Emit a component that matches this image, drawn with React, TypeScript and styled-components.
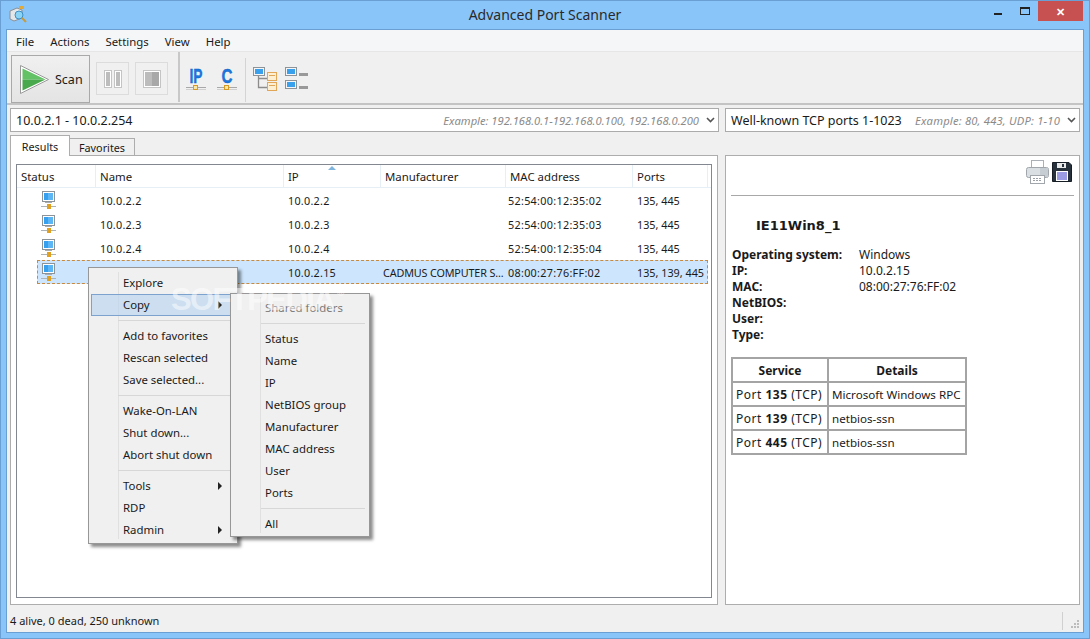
import styled, { createGlobalStyle } from 'styled-components';

const menuBar = ['File', 'Actions', 'Settings', 'View', 'Help'];

const columns = [
  { label: 'Status', width: 79 },
  { label: 'Name', width: 188 },
  { label: 'IP', width: 97 },
  { label: 'Manufacturer', width: 125 },
  { label: 'MAC address', width: 127 },
  { label: 'Ports', width: 75 },
];

const hosts = [
  { name: '10.0.2.2', ip: '10.0.2.2', maker: '', mac: '52:54:00:12:35:02', ports: '135, 445' },
  { name: '10.0.2.3', ip: '10.0.2.3', maker: '', mac: '52:54:00:12:35:03', ports: '135, 445' },
  { name: '10.0.2.4', ip: '10.0.2.4', maker: '', mac: '52:54:00:12:35:04', ports: '135, 445' },
  { name: '', ip: '10.0.2.15', maker: 'CADMUS COMPUTER S...', mac: '08:00:27:76:FF:02', ports: '135, 139, 445', selected: true },
];

const info = [
  ['Operating system:', 'Windows'],
  ['IP:', '10.0.2.15'],
  ['MAC:', '08:00:27:76:FF:02'],
  ['NetBIOS:', ''],
  ['User:', ''],
  ['Type:', ''],
];

const services = [
  { port: '135', details: 'Microsoft Windows RPC' },
  { port: '139', details: 'netbios-ssn' },
  { port: '445', details: 'netbios-ssn' },
];

type MenuEntry = { label?: string; arrow?: boolean; active?: boolean; muted?: boolean };

const mainMenu: MenuEntry[] = [
  { label: 'Explore' },
  { label: 'Copy', arrow: true, active: true },
  {},
  { label: 'Add to favorites' },
  { label: 'Rescan selected' },
  { label: 'Save selected...' },
  {},
  { label: 'Wake-On-LAN' },
  { label: 'Shut down...' },
  { label: 'Abort shut down' },
  {},
  { label: 'Tools', arrow: true },
  { label: 'RDP' },
  { label: 'Radmin', arrow: true },
];

const copyMenu: MenuEntry[] = [
  { label: 'Shared folders', muted: true },
  {},
  { label: 'Status' },
  { label: 'Name' },
  { label: 'IP' },
  { label: 'NetBIOS group' },
  { label: 'Manufacturer' },
  { label: 'MAC address' },
  { label: 'User' },
  { label: 'Ports' },
  {},
  { label: 'All' },
];

function AppIcon() {
  return (
    <svg width='18' height='18' viewBox='0 0 18 18'>
      <path d='M1 5 L8 2 L13 4 L13 12 L5 15 L1 13 Z' fill='#e4e6e8' stroke='#8a8f96' />
      <rect x='10' y='0' width='5' height='3' fill='#e0a93c' />
      <circle cx='10' cy='9' r='4' fill='#8cd4f6' stroke='#3f8fc4' />
      <path d='M13 12 L17 16' stroke='#c99a3a' strokeWidth='2' />
    </svg>
  );
}

function HostIcon() {
  return (
    <svg width='16' height='19' viewBox='0 0 16 19'>
      <rect x='1.5' y='0.5' width='12' height='10' fill='#fff' stroke='#8d9499' />
      <rect x='3' y='2' width='9' height='7' fill='#36a0ee' />
      <rect x='7' y='2' width='5' height='7' fill='#5cb6f5' />
      <rect x='4' y='11' width='7' height='1' fill='#a8adb2' />
      <path d='M0 15.5 H15' stroke='#aeb3b6' />
      <rect x='6' y='13' width='4' height='5' fill='#e0a020' />
    </svg>
  );
}

function PlayIcon() {
  return (
    <svg width='29' height='29' viewBox='0 0 29 29'>
      <path d='M0.5 0.5 L28.5 14.5 L0.5 28.5 Z' fill='#fff' stroke='#9a9a9a' />
      <path d='M2.5 3.5 L25.5 14.5 L2.5 14.5 Z' fill='#62c265' />
      <path d='M2.5 14.5 L25.5 14.5 L2.5 25.5 Z' fill='#48a84c' />
    </svg>
  );
}

function PauseIcon() {
  return (
    <svg width='18' height='18' viewBox='0 0 18 18'>
      <rect x='0.5' y='0.5' width='7' height='17' fill='#fff' stroke='#c4c4c4' />
      <rect x='2' y='2' width='4' height='14' fill='#bdbdbd' />
      <rect x='10.5' y='0.5' width='7' height='17' fill='#fff' stroke='#c4c4c4' />
      <rect x='12' y='2' width='4' height='14' fill='#bdbdbd' />
    </svg>
  );
}

function StopIcon() {
  return (
    <svg width='18' height='18' viewBox='0 0 18 18'>
      <rect x='0.5' y='0.5' width='17' height='17' fill='#fff' stroke='#c4c4c4' />
      <rect x='2' y='2' width='14' height='14' fill='#bcbcbc' />
      <rect x='9' y='2' width='7' height='14' fill='#a8a8a8' />
    </svg>
  );
}

function ScanRangeIcon({ label, textWidth }: { label: string; textWidth: number }) {
  return (
    <svg width='20' height='24' viewBox='0 0 20 24'>
      <text
        x='10'
        y='16'
        textAnchor='middle'
        textLength={textWidth}
        lengthAdjust='spacingAndGlyphs'
        fontFamily='Liberation Sans, sans-serif'
        fontWeight='700'
        fontSize='20'
        fill='#1a78e0'
        stroke='#0d5cc0'
        strokeWidth='0.4'
      >
        {label}
      </text>
      <path d='M0 20.5 H20' stroke='#a8a8a8' />
      <path d='M0 22.5 H20' stroke='#d0d0d0' />
      <rect x='7.5' y='18.5' width='4' height='4' fill='#f8e8a8' stroke='#d89a20' />
    </svg>
  );
}

function TreeIcon() {
  return (
    <svg width='25' height='24' viewBox='0 0 25 24'>
      <rect x='0.5' y='0.5' width='11' height='8' fill='#f4f6f8' stroke='#8d9499' />
      <rect x='2' y='2' width='8' height='5' fill='#38a0ec' />
      <path d='M5.5 9 V20.5 H14 M5.5 11.5 H14' fill='none' stroke='#8c8c8c' strokeWidth='1.3' />
      <rect x='14.5' y='5.5' width='9' height='8' fill='#fdf0d2' stroke='#e2a658' />
      <path d='M16 8.5 H22' stroke='#e2a658' />
      <rect x='14.5' y='15.5' width='9' height='8' fill='#fdf0d2' stroke='#e2a658' />
      <path d='M16 18.5 H22' stroke='#e2a658' />
    </svg>
  );
}

function ListIcon() {
  return (
    <svg width='23' height='23' viewBox='0 0 23 23'>
      <rect x='0.5' y='0.5' width='11' height='8' fill='#f4f6f8' stroke='#8d9499' />
      <rect x='2' y='2' width='8' height='5' fill='#38a0ec' />
      <rect x='14' y='6' width='9' height='3' fill='#999' />
      <rect x='0.5' y='13.5' width='11' height='8' fill='#f4f6f8' stroke='#8d9499' />
      <rect x='2' y='15' width='8' height='5' fill='#38a0ec' />
      <rect x='14' y='19' width='9' height='3' fill='#999' />
    </svg>
  );
}

function PrinterIcon() {
  return (
    <svg width='23' height='24' viewBox='0 0 23 24'>
      <rect x='5.5' y='0.5' width='12' height='8' fill='#fff' stroke='#aab0b5' />
      <rect x='0.5' y='7.5' width='22' height='10' rx='2' fill='#d9dfe3' stroke='#a0a6ab' />
      <rect x='14' y='8' width='8' height='9' fill='#c6ced3' />
      <rect x='4.5' y='15.5' width='14' height='8' fill='#fff' stroke='#a0a6ab' />
      <path d='M7 18.5 H16 M7 20.5 H16' stroke='#9aa0a5' strokeDasharray='2 1' />
    </svg>
  );
}

function SaveIcon() {
  return (
    <svg width='20' height='20' viewBox='0 0 20 20'>
      <path d='M0.5 0.5 H17 L19.5 3 V19.5 H0.5 Z' fill='#27313c' stroke='#171d24' />
      <rect x='5' y='1' width='9' height='5' fill='#e8e8e8' />
      <rect x='10' y='2' width='2' height='3' fill='#27313c' />
      <rect x='4' y='9' width='12' height='10' fill='#fff' />
      <path d='M5 11 H15 M5 13 H15 M5 15 H15 M5 17 H15' stroke='#3838c8' />
    </svg>
  );
}

function Chevron() {
  return (
    <svg width='9' height='6' viewBox='0 0 9 6'>
      <path d='M1 1 L4.5 4.5 L8 1' fill='none' stroke='#555' strokeWidth='1.6' />
    </svg>
  );
}

function ContextMenu({ items, variant }: { items: MenuEntry[]; variant: 'main' | 'copy' }) {
  const Box = variant === 'main' ? MainMenu_div : CopyMenu_div;
  return (
    <Box>
      {items.map((item, index) =>
        item.label ? (
          <MenuItem_div
            key={index}
            $active={item.active}
            $muted={item.muted}
            $indent={variant === 'main' ? 32 : 31}
          >
            {item.label}
            {item.arrow && <MenuArrow_span />}
          </MenuItem_div>
        ) : (
          <MenuSeparator_div key={index} />
        ),
      )}
    </Box>
  );
}

export default function App() {
  return (
    <>
      <GlobalStyle />
      <Window_div>
        {/* Title bar */}
        <TitleBar_div>
          <TitleIcon_span>
            <AppIcon />
          </TitleIcon_span>
          <Title_span>Advanced Port Scanner</Title_span>
          <WindowButtons_div>
            <MinimizeButton_span />
            <MaximizeButton_span />
            <CloseButton_span>✕</CloseButton_span>
          </WindowButtons_div>
        </TitleBar_div>

        <Client_div>
          {/* Menu */}
          <MenuBar_div>
            {menuBar.map((name) => (
              <span key={name}>{name}</span>
            ))}
          </MenuBar_div>

          {/* Toolbar */}
          <Toolbar_div>
            <ScanButton_div>
              <PlayIcon />
              <span>Scan</span>
            </ScanButton_div>
            <GhostButton_div>
              <PauseIcon />
            </GhostButton_div>
            <GhostButton_div>
              <StopIcon />
            </GhostButton_div>
            <ToolbarDivider_div />
            <ToolIcons_div>
              <ScanRangeIcon label='IP' textWidth={13} />
              <ScanRangeIcon label='C' textWidth={11} />
              <SmallDivider_div />
              <TreeIcon />
              <ListSlot_span>
                <ListIcon />
              </ListSlot_span>
            </ToolIcons_div>
          </Toolbar_div>

          {/* Range and ports */}
          <InputRow_div>
            <Combo_div $width={709}>
              <ComboValue_span>10.0.2.1 - 10.0.2.254</ComboValue_span>
              <ComboHint_span>Example: 192.168.0.1-192.168.0.100, 192.168.0.200</ComboHint_span>
              <Chevron />
            </Combo_div>
            <Combo_div $width={355}>
              <ComboValue_span>Well-known TCP ports 1-1023</ComboValue_span>
              <ComboHint_span $spacing={0.2}>Example: 80, 443, UDP: 1-10</ComboHint_span>
              <Chevron />
            </Combo_div>
          </InputRow_div>

          <Body_div>
            {/* Left side */}
            <LeftColumn_div>
              <Tabs_div>
                <Tab_div $current>Results</Tab_div>
                <Tab_div>Favorites</Tab_div>
              </Tabs_div>
              <TabPane_div>
                <List_div>
                  <ListHeader_div>
                    {columns.map((col) => (
                      <HeaderCell_div key={col.label} $width={col.width}>
                        {col.label}
                        {col.label === 'IP' && <SortMark_span />}
                      </HeaderCell_div>
                    ))}
                  </ListHeader_div>
                  {hosts.map((host) => (
                    <HostRow_div key={host.ip}>
                      <HostFields_div $selected={host.selected}>
                        <IconCell_div>
                          <HostIcon />
                        </IconCell_div>
                        <Cell_div $width={188} $spacing={0.25}>{host.name}</Cell_div>
                        <Cell_div $width={95} $spacing={0.25}>{host.ip}</Cell_div>
                        <Cell_div $width={125} $spacing={-0.15}>{host.maker}</Cell_div>
                        <Cell_div $width={129} $spacing={0.3}>{host.mac}</Cell_div>
                        <Cell_div $width={75}>{host.ports}</Cell_div>
                      </HostFields_div>
                    </HostRow_div>
                  ))}
                </List_div>
              </TabPane_div>
            </LeftColumn_div>

            {/* Right side */}
            <Details_div>
              <DetailsTools_div>
                <PrinterIcon />
                <SaveIcon />
              </DetailsTools_div>
              <HostName_h2>IE11Win8_1</HostName_h2>
              <Info_dl>
                {info.map(([label, value]) => (
                  <InfoRow_div key={label}>
                    <dt>{label}</dt>
                    <dd>{value}</dd>
                  </InfoRow_div>
                ))}
              </Info_dl>
              <Services_table>
                <thead>
                  <tr>
                    <th>Service</th>
                    <th>Details</th>
                  </tr>
                </thead>
                <tbody>
                  {services.map((service) => (
                    <tr key={service.port}>
                      <td>
                        Port <b>{service.port}</b> (TCP)
                      </td>
                      <td>{service.details}</td>
                    </tr>
                  ))}
                </tbody>
              </Services_table>
            </Details_div>
          </Body_div>

          {/* Status bar */}
          <StatusBar_div>
            <span>4 alive, 0 dead, 250 unknown</span>
            <StatusDivider_div />
            <Grip_svg viewBox='0 0 9 9'>
              <path d='M7 0h2v2H7zM4 3h2v2H4zM7 3h2v2H7zM1 6h2v2H1zM4 6h2v2H4zM7 6h2v2H7z' fill='#bcbcbc' />
            </Grip_svg>
          </StatusBar_div>
        </Client_div>

        {/* Popups */}
        <ContextMenu items={mainMenu} variant='main' />
        <ContextMenu items={copyMenu} variant='copy' />
        <Watermark_div>
          SOFTPEDIA<WatermarkMark_span>®</WatermarkMark_span>
        </Watermark_div>
      </Window_div>
    </>
  );
}
// --------------- Styled ---------------
const GlobalStyle = createGlobalStyle`
  html, body {
    margin: 0;
    padding: 0;
    overflow: hidden;
  }
  * {
    box-sizing: border-box;
  }
  body {
    font-family: 'Noto Sans', 'Liberation Sans', sans-serif;
    font-size: 11.4px;
    color: #1a1a1a;
  }
`;
const Window_div = styled.div`
  position: relative;
  width: 1090px;
  height: 639px;
  background: #8ac5fa;
  box-shadow: inset 0 0 0 1px #6a9fd4;
  display: flex;
  flex-direction: column;
  overflow: hidden;
`;
const TitleBar_div = styled.div`
  position: relative;
  height: 30px;
  flex: none;
  display: flex;
  align-items: center;
  justify-content: center;
  padding-bottom: 1px;
`;
const TitleIcon_span = styled.span`
  position: absolute;
  left: 9px;
  top: 6px;
  line-height: 0;
`;
const Title_span = styled.span`
  font-size: 14px;
  color: #2a2a2a;
`;
const WindowButtons_div = styled.div`
  position: absolute;
  right: 7px;
  top: 1px;
  display: flex;
  align-items: flex-start;
`;
const MinimizeButton_span = styled.span`
  width: 8px;
  height: 2px;
  margin: 12px 18px 0 0;
  background: #222;
`;
const MaximizeButton_span = styled.span`
  width: 10px;
  height: 8px;
  margin-top: 6px;
  border: 1px solid #222;
  border-top-width: 2px;
`;
const CloseButton_span = styled.span`
  width: 45px;
  height: 20px;
  margin-left: 8px;
  background: #c75050;
  color: #fff;
  font-size: 11px;
  font-weight: 700;
  display: flex;
  align-items: center;
  justify-content: center;
`;
const Client_div = styled.div`
  flex: 1;
  margin: 0 7px 7px;
  background: #f0f0f0;
  display: flex;
  flex-direction: column;
  min-height: 0;
  box-shadow: 0 0 0 1px #6a9fd4;
`;
const MenuBar_div = styled.div`
  height: 22px;
  flex: none;
  background: #f5f6f7;
  border-bottom: 1px solid #e6e6e6;
  display: flex;
  align-items: center;
  gap: 16px;
  padding: 1px 0 0 9px;
`;
const Toolbar_div = styled.div`
  height: 53px;
  flex: none;
  border-bottom: 2px solid #c4c4c4;
  display: flex;
  align-items: flex-start;
  padding: 3px 0 0 4px;
`;
const ScanButton_div = styled.div`
  width: 79px;
  height: 48px;
  border: 1px solid #a9a9a9;
  background: linear-gradient(#f0f0f0, #e4e4e4);
  display: flex;
  align-items: center;
  gap: 6px;
  padding: 1px 0 0 8px;
  font-size: 12.5px;
`;
const GhostButton_div = styled.div`
  width: 33px;
  height: 33px;
  margin: 7px 0 0 6px;
  border: 1px solid #dcdcdc;
  display: flex;
  align-items: center;
  justify-content: center;
`;
const ToolbarDivider_div = styled.div`
  width: 2px;
  height: 50px;
  margin: -3px 0 0 10px;
  background: #c8c8c8;
`;
const ToolIcons_div = styled.div`
  display: flex;
  align-items: flex-start;
  gap: 11px;
  padding: 12px 0 0 6px;
`;
const SmallDivider_div = styled.div`
  width: 1px;
  height: 44px;
  margin: -9px -4px 0 -3px;
  background: #d4d4d4;
`;
const ListSlot_span = styled.span`
  margin-left: -4px;
  line-height: 0;
`;
const InputRow_div = styled.div`
  height: 30px;
  flex: none;
  display: flex;
  gap: 6px;
  padding: 3px 0 0 3px;
`;
const Combo_div = styled.div<{ $width: number }>`
  width: ${(p) => p.$width}px;
  height: 24px;
  background: #fff;
  border: 1px solid #ababab;
  display: flex;
  align-items: center;
  padding: 0 3px 0 5px;
`;
const ComboValue_span = styled.span`
  font-size: 12.5px;
`;
const ComboHint_span = styled.span<{ $spacing?: number }>`
  margin-left: auto;
  margin-right: 7px;
  font-size: 11.2px;
  font-style: italic;
  letter-spacing: ${(p) => p.$spacing ?? 0}px;
  color: #8a8a8a;
`;
const Body_div = styled.div`
  flex: none;
  display: flex;
  gap: 7px;
  padding-left: 3px;
`;
const LeftColumn_div = styled.div`
  width: 708px;
  flex: none;
  display: flex;
  flex-direction: column;
`;
const Tabs_div = styled.div`
  height: 21px;
  flex: none;
  display: flex;
  align-items: flex-end;
  position: relative;
  z-index: 1;
`;
const Tab_div = styled.div<{ $current?: boolean }>`
  height: ${(p) => (p.$current ? 21 : 18)}px;
  width: ${(p) => (p.$current ? 60 : 65)}px;
  background: ${(p) => (p.$current ? '#fff' : '#f0f0f0')};
  border: 1px solid #adadad;
  border-bottom: ${(p) => (p.$current ? 'none' : '1px solid #adadad')};
  border-left: ${(p) => (p.$current ? '1px solid #adadad' : 'none')};
  display: flex;
  align-items: center;
  justify-content: center;
  font-size: 10.8px;
`;
const TabPane_div = styled.div`
  height: 450px;
  flex: none;
  margin-top: -1px;
  background: #fff;
  border: 1px solid #adadad;
  padding: 8px 0 6px 5px;
`;
const List_div = styled.div`
  height: 100%;
  width: 696px;
  border: 1px solid #828790;
  font-size: 11px;
`;
const ListHeader_div = styled.div`
  height: 23px;
  display: flex;
  border-bottom: 1px solid #e6eef6;
`;
const HeaderCell_div = styled.div<{ $width: number }>`
  position: relative;
  flex: none;
  width: ${(p) => p.$width}px;
  padding: 4px 0 0 4px;
  border-right: 1px solid #e6eef6;
  font-size: 11.4px;
`;
const SortMark_span = styled.span`
  position: absolute;
  left: 44px;
  top: 1px;
  width: 0;
  height: 0;
  border-left: 4px solid transparent;
  border-right: 4px solid transparent;
  border-bottom: 4px solid #7fb4dc;
`;
const HostRow_div = styled.div`
  height: 24px;
  display: flex;
  padding: 0 3px 0 20px;
`;
const HostFields_div = styled.div<{ $selected?: boolean }>`
  flex: 1;
  display: flex;
  align-items: center;
  background: ${(p) => (p.$selected ? '#cde6fd' : 'transparent')};
  outline: ${(p) => (p.$selected ? '1px dashed #c98a3c' : 'none')};
  outline-offset: -1px;
`;
const IconCell_div = styled.div`
  width: 59px;
  flex: none;
  padding-left: 4px;
  line-height: 0;
`;
const Cell_div = styled.div<{ $width: number; $spacing?: number }>`
  flex: none;
  width: ${(p) => p.$width}px;
  padding-left: 4px;
  white-space: nowrap;
  overflow: hidden;
  font-size: 10.8px;
  letter-spacing: ${(p) => p.$spacing ?? 0}px;
`;
const Details_div = styled.div`
  flex: 1;
  height: 450px;
  margin: 20px 3px 0 0;
  background: #fff;
  border: 1px solid #adadad;
  padding: 0 5px;
  display: flex;
  flex-direction: column;
`;
const DetailsTools_div = styled.div`
  height: 40px;
  flex: none;
  border-bottom: 1px solid #a8a8a8;
  display: flex;
  justify-content: flex-end;
  align-items: flex-start;
  gap: 3px;
  padding: 4px 2px 0 0;
  svg:last-child {
    margin-top: 2px;
  }
`;
const HostName_h2 = styled.h2`
  margin: 20px 0 0 25px;
  line-height: 19px;
  font-weight: 700;
  font-family: 'DejaVu Sans', sans-serif;
  font-size: 13px;
`;
const Info_dl = styled.dl`
  margin: 12px 0 0 1px;
  font-size: 12px;
  line-height: 16px;
`;
const InfoRow_div = styled.div`
  display: flex;
  dt {
    width: 127px;
    font-weight: 700;
  }
  dd {
    margin: 0;
  }
`;
const Services_table = styled.table`
  width: 236px;
  margin-top: 14px;
  border-collapse: collapse;
  table-layout: fixed;
  font-size: 12px;
  th,
  td {
    height: 24px;
    padding: 0 3px;
    border: 2px solid #a4a4a4;
    white-space: nowrap;
  }
  th {
    font-weight: 700;
    text-align: center;
  }
  th:first-child {
    width: 96px;
  }
  td:first-child {
    letter-spacing: 0.5px;
  }
  td:last-child {
    font-size: 11.6px;
  }
`;
const StatusBar_div = styled.div`
  flex: 1;
  display: flex;
  align-items: center;
  padding: 4px 4px 0 3px;
  font-size: 11px;
`;
const StatusDivider_div = styled.div`
  width: 1px;
  height: 18px;
  margin-left: auto;
  margin-right: 7px;
  background: #d0d0d0;
`;
const Grip_svg = styled.svg`
  width: 9px;
  height: 9px;
  align-self: flex-end;
  margin-bottom: 3px;
`;
const PopupMenu_div = styled.div`
  position: absolute;
  background: #f0f0f0;
  border: 1px solid #979797;
  box-shadow: 3px 3px 3px rgba(0, 0, 0, 0.45);
`;
const MainMenu_div = styled(PopupMenu_div)`
  left: 88px;
  top: 267px;
  width: 150px;
  height: 277px;
  padding: 4px 2px 2px;
  background-image: linear-gradient(#e0e0e0, #e0e0e0);
  background-repeat: no-repeat;
  background-size: 1px calc(100% - 8px);
  background-position: 29px 4px;
`;
const CopyMenu_div = styled(PopupMenu_div)`
  left: 230px;
  top: 293px;
  width: 140px;
  height: 244px;
  padding: 3px 4px 1px 3px;
  background-image: linear-gradient(#e0e0e0, #e0e0e0);
  background-repeat: no-repeat;
  background-size: 1px calc(100% - 6px);
  background-position: 29px 3px;
`;
const MenuItem_div = styled.div<{ $active?: boolean; $muted?: boolean; $indent: number }>`
  position: relative;
  height: 22px;
  display: flex;
  align-items: center;
  padding: 0 0 1px ${(p) => p.$indent}px;
  color: ${(p) => (p.$muted ? '#7a7a7a' : '#1a1a1a')};
  background: ${(p) => (p.$active ? 'rgba(180, 210, 240, 0.6)' : 'transparent')};
  box-shadow: ${(p) => (p.$active ? 'inset 0 0 0 1px #7da2ce' : 'none')};
`;
const MenuArrow_span = styled.span`
  position: absolute;
  right: 13px;
  top: 7px;
  width: 0;
  height: 0;
  border-top: 4px solid transparent;
  border-bottom: 4px solid transparent;
  border-left: 4px solid #222;
`;
const MenuSeparator_div = styled.div`
  height: 9px;
  margin-left: 27px;
  padding-top: 4px;
  &::after {
    content: '';
    display: block;
    height: 1px;
    background: #d7d7d7;
  }
`;
const Watermark_div = styled.div`
  position: absolute;
  left: 171px;
  top: 282px;
  font-family: 'Liberation Sans', sans-serif;
  font-size: 31px;
  font-weight: 700;
  letter-spacing: -1.6px;
  color: rgba(255, 255, 255, 0.5);
  pointer-events: none;
`;
const WatermarkMark_span = styled.span`
  font-size: 10px;
  vertical-align: 14px;
  margin-left: 3px;
`;
